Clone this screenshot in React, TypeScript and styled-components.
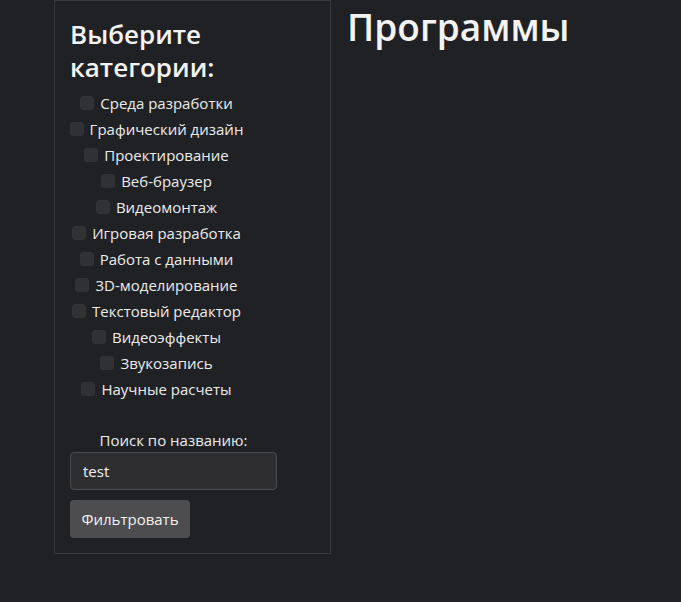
import React from "react";
import styled, { createGlobalStyle } from "styled-components";

const Global = createGlobalStyle`
  html, body { margin: 0; padding: 0; background: #202124; }
  body { font-family: "Open Sans", "Noto Sans", sans-serif; color: #f1f1f1; }
  * { box-sizing: border-box; }
`;

const Page = styled.div`
  display: flex;
  align-items: flex-start;
  min-height: 602px;
  padding-left: 54px;
`;

const Sidebar = styled.aside`
  width: 277px;
  height: 554px;
  border: 1px solid #37383b;
  padding: 16px 15px 0 15px;
  display: flex;
  flex-direction: column;
`;

const Title = styled.h2`
  margin: 1px 0 6px 0;
  font-size: 26px;
  line-height: 33px;
  font-weight: 600;
  color: #f3f3f3;
`;

const CategoryList = styled.div`
  width: 173px;
  display: flex;
  flex-direction: column;
  align-items: center;
`;

const Row = styled.label`
  display: flex;
  align-items: center;
  gap: 6px;
  height: 26px;
  font-size: 15px;
  color: #ececec;
  white-space: nowrap;
`;

const Box = styled.input`
  appearance: none;
  margin: 0;
  width: 14px;
  height: 14px;
  border-radius: 3px;
  background: #303134;
  border: 1px solid #323336;
`;

const Search = styled.div`
  width: 207px;
  margin-top: 27px;
  display: flex;
  flex-direction: column;
`;

const SearchLabel = styled.div`
  text-align: center;
  font-size: 15px;
  line-height: 22px;
  color: #ececec;
  margin-bottom: 1px;
`;

const TextInput = styled.input`
  height: 38px;
  width: 207px;
  background: #2e2e30;
  border: 1px solid #4a4b4e;
  border-radius: 4px;
  color: #f2f2f2;
  font-family: inherit;
  font-size: 15px;
  padding: 0 12px;
  outline: none;
`;

const Button = styled.button`
  margin-top: 10px;
  align-self: flex-start;
  height: 38px;
  width: 120px;
  background: #4d4d4f;
  color: #f2f2f2;
  border: none;
  border-radius: 4px;
  font-family: inherit;
  font-size: 15px;
  padding: 0;
`;

const Main = styled.main`
  padding-left: 16px;
`;

const Heading = styled.h1`
  margin: 5px 0 0 0;
  font-size: 37px;
  line-height: 44px;
  font-weight: 600;
  color: #f3f3f3;
`;

const categories = [
  "Среда разработки",
  "Графический дизайн",
  "Проектирование",
  "Веб-браузер",
  "Видеомонтаж",
  "Игровая разработка",
  "Работа с данными",
  "3D-моделирование",
  "Текстовый редактор",
  "Видеоэффекты",
  "Звукозапись",
  "Научные расчеты",
];

export default function App() {
  return (
    <>
      <Global />
      <Page>
        <Sidebar>
          <Title>
            Выберите
            <br />
            категории:
          </Title>
          <CategoryList>
            {categories.map((c) => (
              <Row key={c}>
                <Box type="checkbox" />
                {c}
              </Row>
            ))}
          </CategoryList>
          <Search>
            <SearchLabel>Поиск по названию:</SearchLabel>
            <TextInput defaultValue="test" />
            <Button>Фильтровать</Button>
          </Search>
        </Sidebar>
        <Main>
          <Heading>Программы</Heading>
        </Main>
      </Page>
    </>
  );
}
